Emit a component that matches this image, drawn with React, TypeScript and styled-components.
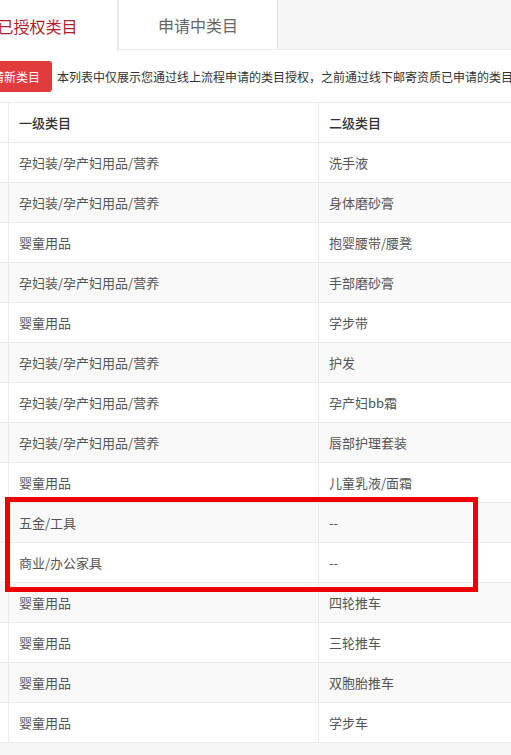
import React from "react";
import styled, { createGlobalStyle } from "styled-components";

const GlobalStyle = createGlobalStyle`
  html, body {
    margin: 0;
    padding: 0;
    background: #f5f5f5;
    font-family: "Noto Sans CJK SC", "Noto Sans", sans-serif;
  }
  #root { overflow: hidden; width: 511px; height: 755px; }
`;

const Page = styled.div`
  position: relative;
  width: 511px;
  height: 755px;
  overflow: hidden;
  background: #f5f5f5;
`;

const Shift = styled.div`
  margin-left: -42px;
  width: 700px;
`;

const TabBar = styled.div`
  display: flex;
  height: 50px;
  background: #f5f5f5;
  border-bottom: 1px solid #ebebeb;
  box-sizing: border-box;
`;

const Tab = styled.div<{ $active?: boolean }>`
  width: 160px;
  box-sizing: border-box;
  background: #fff;
  display: flex;
  align-items: center;
  justify-content: center;
  font-size: 16px;
  color: ${(p) => (p.$active ? "#b01e2b" : "#666")};
  border-right: 1px solid #e6e6e6;
  border-left: ${(p) => (p.$active ? "none" : "1px solid #f0f0f0")};
  border-bottom: ${(p) => (p.$active ? "none" : "1px solid #ebebeb")};
  border-radius: ${(p) => (p.$active ? "0" : "0 0 3px 3px")};
  margin-bottom: ${(p) => (p.$active ? "-1px" : "0")};
  height: ${(p) => (p.$active ? "51px" : "50px")};
`;

const Content = styled.div`
  background: #fff;
  padding: 11px 0 0 10px;
`;

const Toolbar = styled.div`
  display: flex;
  align-items: center;
  gap: 5px;
  height: 31px;
  margin-bottom: 10px;
`;

const Button = styled.button`
  height: 31px;
  padding: 0 12px;
  border: none;
  border-radius: 3px;
  background: #e23b3b;
  color: #fff;
  font-family: inherit;
  font-size: 12px;
  line-height: 31px;
  white-space: nowrap;
`;

const Note = styled.span`
  font-size: 12px;
  color: #333;
  white-space: nowrap;
`;

const Table = styled.div`
  border-top: 1px solid #ebebeb;
`;

const Row = styled.div<{ $striped?: boolean }>`
  display: grid;
  grid-template-columns: 41px 310px 330px;
  height: 40px;
  box-sizing: border-box;
  border-bottom: 1px solid #ebebeb;
  background: ${(p) => (p.$striped ? "#f9f9f9" : "#fff")};
`;

const Cell = styled.div<{ $head?: boolean }>`
  display: flex;
  align-items: center;
  padding-left: 10px;
  border-right: 1px solid #ebebeb;
  font-size: 13px;
  color: ${(p) => (p.$head ? "#333" : "#555")};
  font-weight: ${(p) => (p.$head ? 500 : 400)};
  white-space: nowrap;
  overflow: hidden;
`;

const Highlight = styled.div`
  position: absolute;
  left: 5px;
  top: 497px;
  width: 473px;
  height: 95px;
  box-sizing: border-box;
  border: 5px solid #ee0000;
  pointer-events: none;
`;

const rows: [string, string][] = [
  ["孕妇装/孕产妇用品/营养", "洗手液"],
  ["孕妇装/孕产妇用品/营养", "身体磨砂膏"],
  ["婴童用品", "抱婴腰带/腰凳"],
  ["孕妇装/孕产妇用品/营养", "手部磨砂膏"],
  ["婴童用品", "学步带"],
  ["孕妇装/孕产妇用品/营养", "护发"],
  ["孕妇装/孕产妇用品/营养", "孕产妇bb霜"],
  ["孕妇装/孕产妇用品/营养", "唇部护理套装"],
  ["婴童用品", "儿童乳液/面霜"],
  ["五金/工具", "--"],
  ["商业/办公家具", "--"],
  ["婴童用品", "四轮推车"],
  ["婴童用品", "三轮推车"],
  ["婴童用品", "双胞胎推车"],
  ["婴童用品", "学步车"],
];

export default function App() {
  return (
    <Page>
      <GlobalStyle />
      <Shift>
        <TabBar>
          <Tab $active>已授权类目</Tab>
          <Tab>申请中类目</Tab>
        </TabBar>
        <Content>
          <Toolbar>
            <Button>申请新类目</Button>
            <Note>本列表中仅展示您通过线上流程申请的类目授权，之前通过线下邮寄资质已申请的类目</Note>
          </Toolbar>
          <Table>
            <Row>
              <Cell />
              <Cell $head>一级类目</Cell>
              <Cell $head>二级类目</Cell>
            </Row>
            {rows.map(([a, b], i) => (
              <Row key={i} $striped={i % 2 === 1}>
                <Cell />
                <Cell>{a}</Cell>
                <Cell>{b}</Cell>
              </Row>
            ))}
          </Table>
        </Content>
      </Shift>
      <Highlight />
    </Page>
  );
}
